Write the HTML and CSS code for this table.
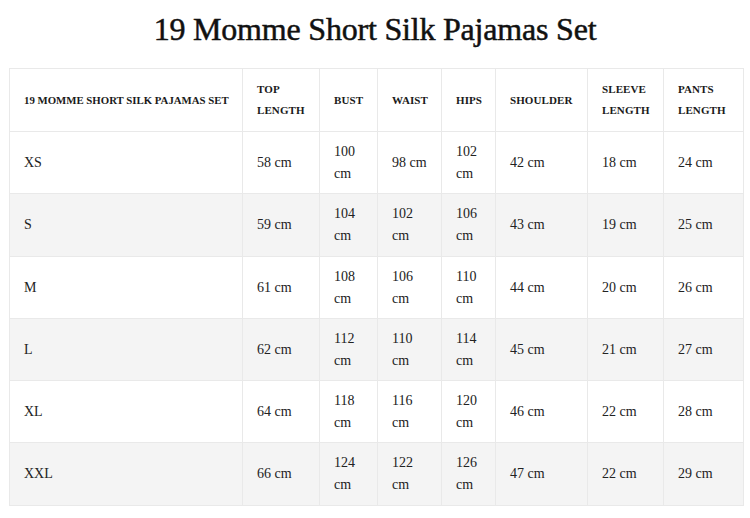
FILE: index.html
```html
<!DOCTYPE html>
<html>
<head>
<meta charset="utf-8">
<link rel="stylesheet" href="styles.css">
</head>
<body>
<h1 class="title">19 Momme Short Silk Pajamas Set</h1>
<table class="size-table">
  <colgroup>
    <col class="c1"><col class="c2"><col class="c3"><col class="c4"><col class="c5"><col class="c6"><col class="c7"><col class="c8">
  </colgroup>
  <thead>
    <tr>
      <th class="nowrap">19 Momme Short Silk Pajamas Set</th>
      <th>Top Length</th>
      <th>Bust</th>
      <th>Waist</th>
      <th>Hips</th>
      <th>Shoulder</th>
      <th>Sleeve Length</th>
      <th>Pants Length</th>
    </tr>
  </thead>
  <tbody>
    <tr><td>XS</td><td>58 cm</td><td>100 cm</td><td>98 cm</td><td>102 cm</td><td>42 cm</td><td>18 cm</td><td>24 cm</td></tr>
    <tr><td>S</td><td>59 cm</td><td>104 cm</td><td>102 cm</td><td>106 cm</td><td>43 cm</td><td>19 cm</td><td>25 cm</td></tr>
    <tr><td>M</td><td>61 cm</td><td>108 cm</td><td>106 cm</td><td>110 cm</td><td>44 cm</td><td>20 cm</td><td>26 cm</td></tr>
    <tr><td>L</td><td>62 cm</td><td>112 cm</td><td>110 cm</td><td>114 cm</td><td>45 cm</td><td>21 cm</td><td>27 cm</td></tr>
    <tr><td>XL</td><td>64 cm</td><td>118 cm</td><td>116 cm</td><td>120 cm</td><td>46 cm</td><td>22 cm</td><td>28 cm</td></tr>
    <tr><td>XXL</td><td>66 cm</td><td>124 cm</td><td>122 cm</td><td>126 cm</td><td>47 cm</td><td>22 cm</td><td>29 cm</td></tr>
  </tbody>
</table>
</body>
</html>
```
FILE: styles.css
```css
html, body {
  margin: 0;
  padding: 0;
  background: #fff;
}
body {
  font-family: "Liberation Serif", "Times New Roman", serif;
  color: #222;
}
.title {
  margin: 0 0 19px;
  padding-top: 9px;
  font-size: 32px;
  line-height: 40px;
  font-weight: normal;
  text-align: center;
  color: #111;
  letter-spacing: -0.2px;
  -webkit-text-stroke: 0.5px #111;
}
.size-table {
  margin-left: 9px;
  border-collapse: collapse;
  table-layout: fixed;
  width: 734px;
}
.c1 { width: 233px; }
.c2 { width: 77px; }
.c3 { width: 58px; }
.c4 { width: 64px; }
.c5 { width: 54px; }
.c6 { width: 92px; }
.c7 { width: 76px; }
.c8 { width: 80px; }
.size-table th,
.size-table td {
  border: 1px solid #e9e9e9;
  text-align: left;
  vertical-align: middle;
  padding: 9px 14px 8.3px;
}
.size-table th {
  font-size: 11px;
  font-weight: bold;
  text-transform: uppercase;
  line-height: 21px;
  color: #1a1a1a;
  padding-top: 10px;
  padding-bottom: 10px;
  letter-spacing: 0.1px;
}
.size-table th.nowrap {
  white-space: nowrap;
  font-size: 10.8px;
  letter-spacing: 0;
}
.size-table td {
  font-size: 14px;
  line-height: 22px;
  color: #222;
}
.size-table tbody tr:nth-child(even) td {
  background: #f4f4f4;
}
```
